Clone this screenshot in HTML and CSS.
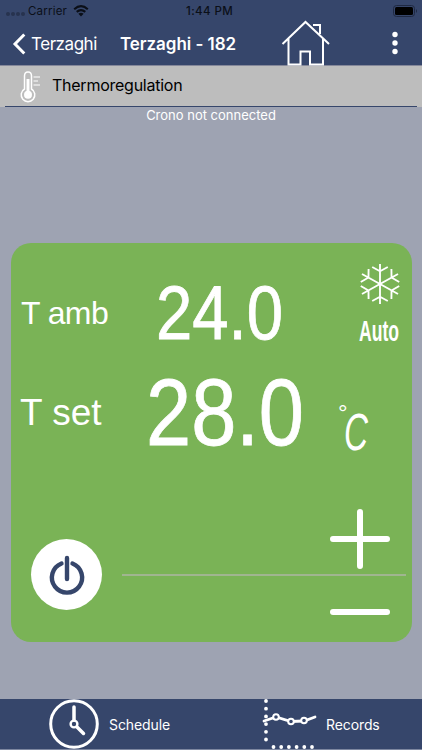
FILE: index.html
```html
<!DOCTYPE html>
<html lang="en">
<head>
  <meta charset="UTF-8" />
  <title>Terzaghi - 182</title>
  <link rel="stylesheet" href="styles.css">
</head>
<body>

<header>
  <div class="status-bar">
    <span class="signal"><i></i><i></i><i></i><i></i></span>
    <span class="carrier">Carrier</span>
    <svg class="wifi" width="16" height="12" viewBox="0 0 16 12">
      <path d="M1.2 4.2 Q8 -1.8 14.8 4.2 M3.7 6.9 Q8 3.3 12.3 6.9" fill="none" stroke="#0b0f18" stroke-width="2.1"/>
      <path d="M5.4 8.7 Q8 6.7 10.6 8.7 L8 11.4 Z" fill="#0b0f18"/>
    </svg>
    <span class="clock">1:44 PM</span>
    <svg class="battery" width="25" height="12" viewBox="0 0 25 12">
      <rect x=".5" y=".5" width="21" height="11" rx="3" fill="none" stroke="#1f2942"/>
      <rect x="2" y="2" width="18" height="8" rx="1.5" fill="#000"/>
      <path d="M23 4 Q25 6 23 8 Z" fill="#1f2942"/>
    </svg>
  </div>
  <nav>
    <svg class="chevron" width="13" height="22" viewBox="0 0 13 22">
      <path d="M11.3 1.5 L2 11 L11.3 20.5" fill="none" stroke="#fff" stroke-width="3"/>
    </svg>
    <span class="back">Terzaghi</span>
    <h1>Terzaghi - 182</h1>
    <svg class="home" width="50" height="46" viewBox="0 0 50 46">
      <path d="M1.5 24 L24.5 2 L48 24 M7.5 19 V44.5 H19.5 V31.5 H29 V44.5 H42 V19 M32 5 H39 V14" fill="none" stroke="#fff" stroke-width="2"/>
    </svg>
    <svg class="dots" width="6" height="24" viewBox="0 0 6 24">
      <circle cx="3" cy="3.5" r="2.7" fill="#fff"/>
      <circle cx="3" cy="12" r="2.7" fill="#fff"/>
      <circle cx="3" cy="20.5" r="2.7" fill="#fff"/>
    </svg>
  </nav>
</header>

<div class="section-title">
  <svg width="22" height="32" viewBox="0 0 22 32">
    <path d="M4.5 18 V5 Q4.5 1 8 1 T11.5 5 V18 A6.8 6.8 0 1 1 4.5 18 Z" fill="none" stroke="#fff" stroke-width="1.5"/>
    <path d="M8 8 V22" stroke="#fff" stroke-width="3"/>
    <circle cx="8" cy="23.7" r="4" fill="#fff"/>
    <path d="M13.5 6 H20 M13.5 10 H18 M13.5 14 H20" stroke="#fff" stroke-width="1.2"/>
  </svg>
  <span>Thermoregulation</span>
</div>

<main>
  <p class="message">Crono not connected</p>

  <div class="thermostat">
    <div class="row ambient">
      <span class="label">T amb</span>
      <svg class="reading" width="130" height="56" viewBox="0 0 130 56">
        <text x="0" y="54" font-size="76" textLength="127" lengthAdjust="spacingAndGlyphs">24.0</text>
      </svg>
      <div class="mode">
        <svg width="42" height="42" viewBox="-21 -21 42 42">
          <defs>
            <path id="arm" d="M0 0 V-20 M-7.5 -17 L0 -12.8 L7.5 -17"/>
          </defs>
          <g fill="none" stroke="#fff" stroke-width="1.8" transform="scale(1.04 1)">
            <use href="#arm"/>
            <use href="#arm" transform="rotate(60)"/>
            <use href="#arm" transform="rotate(120)"/>
            <use href="#arm" transform="rotate(180)"/>
            <use href="#arm" transform="rotate(240)"/>
            <use href="#arm" transform="rotate(300)"/>
          </g>
        </svg>
        <svg class="auto" width="42" height="30" viewBox="0 0 42 30">
          <text x="0" y="24" font-size="30" textLength="40" lengthAdjust="spacingAndGlyphs">Auto</text>
        </svg>
      </div>
    </div>

    <div class="row setpoint">
      <span class="label">T set</span>
      <svg class="reading" width="162" height="69" viewBox="0 0 162 69">
        <text x="0" y="67" font-size="94" textLength="158" lengthAdjust="spacingAndGlyphs">28.0</text>
      </svg>
      <svg class="unit" width="36" height="56" viewBox="0 0 36 56">
        <text x="0" y="20" font-size="24">°</text>
        <text x="6" y="49" font-size="52" font-style="italic" textLength="24" lengthAdjust="spacingAndGlyphs">C</text>
      </svg>
    </div>

    <div class="controls">
      <button class="power">
        <svg width="36" height="40" viewBox="0 0 36 40">
          <path d="M12.5 8.5 A15.1 15.1 0 1 0 23.5 8.5 M18 3 V24" fill="none" stroke="#36466b" stroke-width="4.4" stroke-linecap="round"/>
        </svg>
      </button>
      <div class="adjust">
        <svg class="plus" width="62" height="62" viewBox="0 0 62 62">
          <path d="M4 31 H58 M31 4 V58" stroke="#fff" stroke-width="6" stroke-linecap="round"/>
        </svg>
        <div class="divider"></div>
        <svg class="minus" width="62" height="8" viewBox="0 0 62 8">
          <path d="M4 4 H58" stroke="#fff" stroke-width="6" stroke-linecap="round"/>
        </svg>
      </div>
    </div>
  </div>
</main>

<footer>
  <div class="tab schedule">
    <svg width="50" height="50" viewBox="0 0 50 50">
      <circle cx="25" cy="25" r="23.3" fill="none" stroke="#fff" stroke-width="3"/>
      <path d="M25 8 V21 M28 28 L34.5 34.5" stroke="#fff" stroke-width="3.5" stroke-linecap="round"/>
      <circle cx="25" cy="25" r="3.4" fill="none" stroke="#fff" stroke-width="2.4"/>
    </svg>
    <span>Schedule</span>
  </div>
  <div class="tab records">
    <svg width="54" height="50" viewBox="0 0 54 50">
      <path d="M3 2 V44" fill="none" stroke="#fff" stroke-width="3.8" stroke-linecap="round" stroke-dasharray="0 7.7"/>
      <path d="M10.5 48 H50" fill="none" stroke="#fff" stroke-width="3.8" stroke-linecap="round" stroke-dasharray="0 7.7"/>
      <path d="M1 22 L13 18 L28 22.5 L41 22 L52 18" fill="none" stroke="#fff" stroke-width="2.8" stroke-linecap="round"/>
      <g fill="#36466b" stroke="#fff" stroke-width="2">
        <circle cx="13" cy="18" r="2.8"/>
        <circle cx="28" cy="22.5" r="2.8"/>
        <circle cx="41" cy="21.5" r="2.8"/>
      </g>
    </svg>
    <span>Records</span>
  </div>
</footer>

</body>
</html>
```
FILE: styles.css
```css
* {
  box-sizing: border-box;
}

body {
  margin: 0;
  height: 750px;
  display: flex;
  flex-direction: column;
  overflow: hidden;
  font-family: Inter, sans-serif;
  background-color: #9ea3b2;
  color: white;
}

svg {
  display: block;
  flex-shrink: 0;
  overflow: visible;
}

header {
  height: 66px;
  background-color: #36466b;
  border-bottom: 1px solid #85889a;
}

.status-bar {
  display: flex;
  align-items: center;
  height: 21px;
  padding: 0 4px 0 6px;
  font-size: 11.5px;
  color: #0b0f18;
}

.signal {
  display: flex;
  gap: 1px;
  width: 22px;
  padding-top: 6px;
}

.signal i {
  width: 4px;
  height: 4px;
  border-radius: 50%;
  background-color: #27334f;
}

.carrier {
  width: 45px;
  letter-spacing: 0.2px;
}

.clock {
  margin-left: 97px;
  font-weight: 500;
  letter-spacing: 0.4px;
}

.battery {
  margin-left: auto;
}

nav {
  display: flex;
  align-items: center;
  height: 45px;
  padding-left: 13px;
}

.back {
  margin-left: 5px;
  width: 89px;
  font-size: 17px;
  letter-spacing: -0.45px;
}

h1 {
  margin: 0;
  width: 161px;
  font-size: 17px;
  font-weight: 600;
  letter-spacing: -0.05px;
}

.home {
  margin-top: -1px;
}

.dots {
  margin-left: 61px;
  margin-top: -2px;
}

.section-title {
  display: flex;
  align-items: center;
  height: 41px;
  padding-left: 20px;
  background: linear-gradient(#36466b, #36466b) 5px 40px / 412px 1px no-repeat #bdbdbd;
  color: black;
  font-size: 16px;
}

.section-title span {
  margin: -3px 0 0 10px;
  letter-spacing: -0.25px;
}

main {
  flex: 1;
}

.message {
  margin: 0;
  height: 136px;
  line-height: 17px;
  text-align: center;
  font-size: 13px;
}

.thermostat {
  width: 401px;
  height: 399px;
  margin-left: 11px;
  border-radius: 20px;
  background-color: #7ab356;
  font-family: "Liberation Sans", sans-serif;
}

.thermostat text {
  fill: white;
}

.row {
  display: flex;
}

.ambient {
  height: 134px;
  padding: 20px 0 0 10px;
}

.label {
  width: 135px;
}

.ambient .label {
  padding-top: 32px;
  font-size: 32px;
  letter-spacing: -0.6px;
}

.ambient .reading {
  margin-top: 22px;
}

.reading text {
  stroke: white;
  stroke-width: 0.8px;
}

.mode {
  margin-left: 73px;
}

.auto {
  margin-top: 12px;
}

.auto text {
  font-weight: bold;
}

.setpoint {
  padding-left: 9px;
}

.setpoint .label {
  width: 126px;
  padding-top: 15px;
  font-size: 37px;
}

.setpoint .reading {
  margin-top: 1px;
}

.unit {
  margin-left: 30px;
  margin-top: 24px;
}

.controls {
  display: flex;
  margin-top: 50px;
  padding-left: 20px;
}

.power {
  display: flex;
  justify-content: center;
  align-items: center;
  width: 71px;
  height: 71px;
  margin-top: 32px;
  padding: 0;
  border: none;
  border-radius: 50%;
  background-color: white;
}

.adjust {
  width: 284px;
  margin-left: 20px;
}

.plus, .minus {
  margin-left: 207px;
}

.plus {
  margin-top: 1px;
}

.divider {
  height: 2px;
  margin: 4px 0 32px;
  background-color: #a0b590;
}

footer {
  display: flex;
  height: 51px;
  background-color: #36466b;
  border-bottom: 1px solid #7d87a0;
  font-size: 14px;
}

.tab {
  display: flex;
  align-items: center;
}

.schedule {
  width: 211px;
  padding-left: 49px;
}

.schedule span {
  margin-left: 10px;
  letter-spacing: -0.1px;
}

.records {
  padding-left: 52px;
}

.records span {
  margin-left: 9px;
  letter-spacing: -0.1px;
}
```
